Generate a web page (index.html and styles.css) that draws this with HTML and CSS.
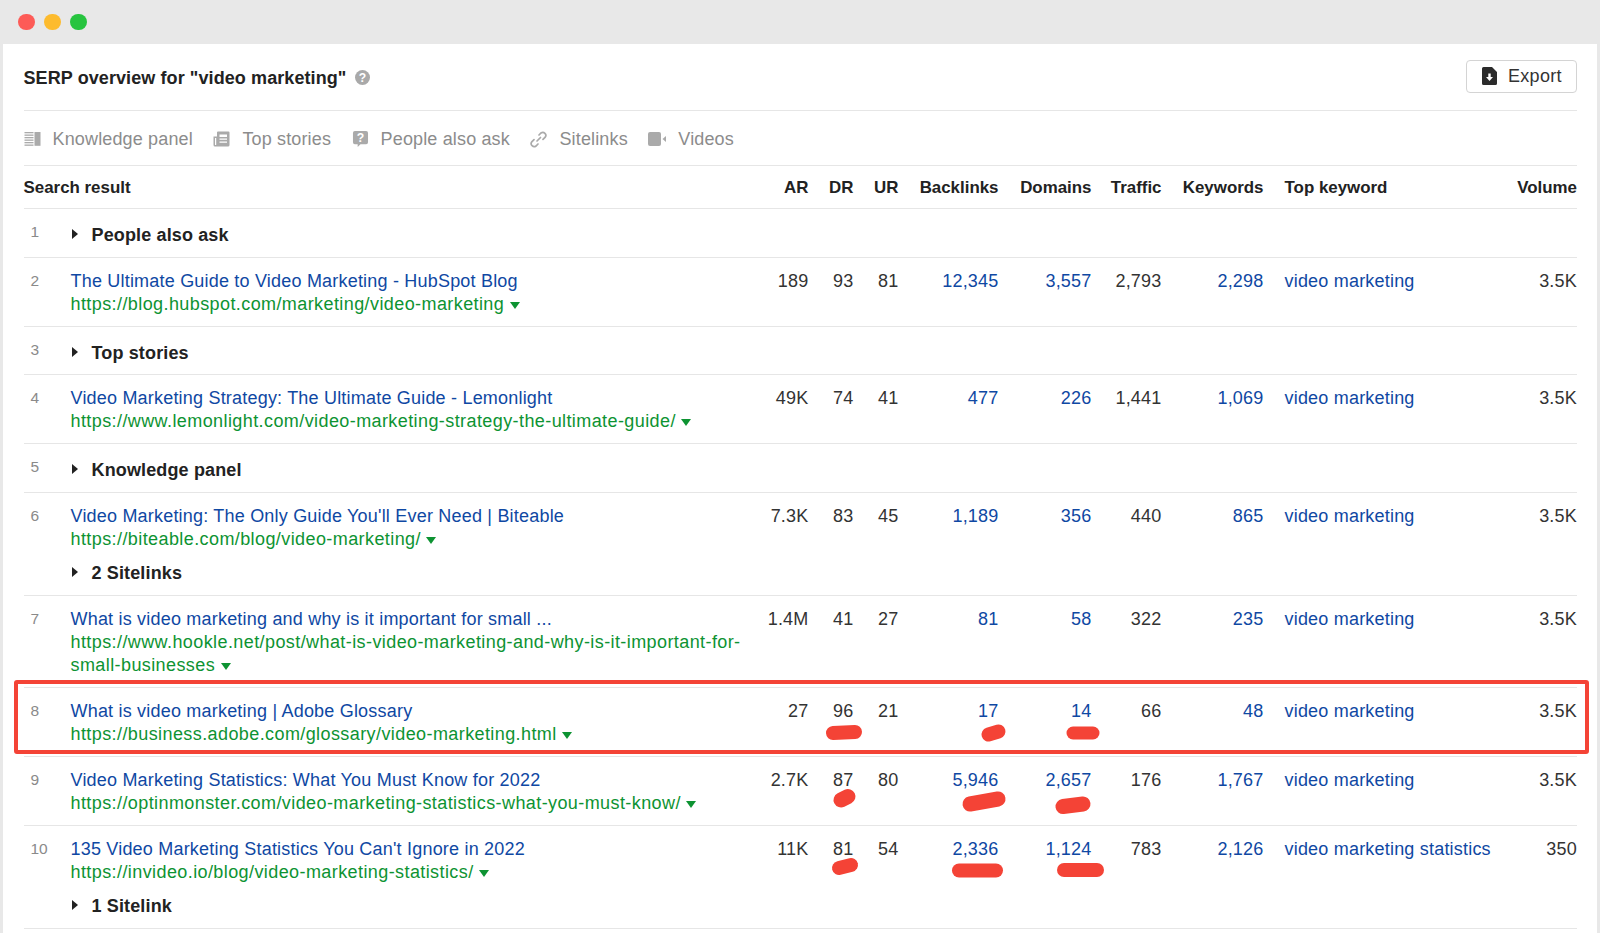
FILE: index.html
```html
<!DOCTYPE html>
<html lang="en">
<head>
<meta charset="utf-8">
<title>SERP overview</title>
<link rel="stylesheet" href="styles.css">
</head>
<body>
<div class="window">
  <div class="titlebar">
    <span class="light red"></span><span class="light yellow"></span><span class="light green"></span>
  </div>
  <main class="panel">
    <header class="head">
      <h1 class="title">SERP overview for "video marketing"
        <svg class="help" viewBox="0 0 16 16"><circle cx="8" cy="8" r="8" fill="#a9a9a9"/><text x="8" y="12.5" text-anchor="middle" class="help-mark">?</text></svg>
      </h1>
      <button class="export">
        <svg class="export-icon" viewBox="0 0 15 18"><path d="M1.5 0H10l5 5v11.5a1.5 1.5 0 0 1-1.5 1.5h-12A1.5 1.5 0 0 1 0 16.500V1.500A1.500 1.500 0 0 1 1.500 0z" fill="#2b2b2b"/><path d="M6.300 6.500h2.400v3.500h2.300L7.500 14 4 10h2.300z" fill="#fff"/></svg>
        Export
      </button>
    </header>
    <nav class="features">
      <span class="feature">
        <svg class="ficon" viewBox="0 0 16 16"><g fill="#aaa"><rect x="0" y="1" width="9" height="1.300"/><rect x="0" y="3.500" width="9" height="1.300"/><rect x="0" y="6" width="9" height="1.300"/><rect x="0" y="8.500" width="9" height="1.300"/><rect x="0" y="11" width="9" height="1.300"/><rect x="0" y="13.500" width="9" height="1.300"/><rect x="10" y="1" width="6" height="13.800"/></g></svg>
        Knowledge panel</span>
      <span class="feature">
        <svg class="ficon" viewBox="0 0 17 16"><path d="M4 1.500a1 1 0 0 1 1-1h10.500a1 1 0 0 1 1 1v12.500a1.500 1.500 0 0 1-1.500 1.500H2a1.500 1.500 0 0 1-1.500-1.500V5.500H4z" fill="#aaa"/><path d="M2 7h1.200v7H2z" fill="#fff"/><path d="M6.500 3.500h7.500v2.500H6.500zM6.500 7.500h7.500v1.300H6.500zM6.500 10.500h7.500v1.300H6.500z" fill="#fff"/></svg>
        Top stories</span>
      <span class="feature">
        <svg class="ficon" viewBox="0 0 16 17"><path d="M2 0h12a2 2 0 0 1 2 2v10a2 2 0 0 1-2 2H8l-3 3v-3H2a2 2 0 0 1-2-2V2a2 2 0 0 1 2-2z" fill="#aaa"/><text x="8" y="11.500" text-anchor="middle" class="help-mark">?</text></svg>
        People also ask</span>
      <span class="feature">
        <svg class="ficon ficon-link" viewBox="0 0 17 17"><g fill="none" stroke="#aaa" stroke-width="1.700" stroke-linecap="round"><path d="M7 10l3.500-3.500"/><path d="M9 4l2-2a3 3 0 0 1 4.200 4.200l-2.200 2.200"/><path d="M8 13l-2 2a3 3 0 0 1-4.200-4.200l2.200-2.200"/></g></svg>
        Sitelinks</span>
      <span class="feature">
        <svg class="ficon ficon-video" viewBox="0 0 18 14"><rect x="0" y="0" width="13" height="14" rx="2" fill="#aaa"/><path d="M14.500 7L18 4v6z" fill="#aaa"/></svg>
        Videos</span>
    </nav>
    <table class="serp">
      <colgroup>
        <col class="c-num"><col class="c-title"><col class="c-ar"><col class="c-dr"><col class="c-ur"><col class="c-back"><col class="c-dom"><col class="c-traffic"><col class="c-key"><col class="c-top"><col class="c-vol">
      </colgroup>
      <thead>
        <tr>
          <th class="left" colspan="2">Search result</th>
          <th>AR</th><th>DR</th><th>UR</th><th>Backlinks</th><th>Domains</th><th>Traffic</th><th>Keywords</th><th class="top">Top keyword</th><th>Volume</th>
        </tr>
      </thead>
      <tbody>
        <tr class="section">
          <td class="num">1</td>
          <td colspan="10"><span class="tri"></span><b>People also ask</b></td>
        </tr>
        <tr>
          <td class="num">2</td>
          <td><a class="link">The Ultimate Guide to Video Marketing - HubSpot Blog</a><div class="url">https://blog.hubspot.com/marketing/video-marketing <span class="caret"></span></div></td>
          <td>189</td><td>93</td><td>81</td><td class="blue">12,345</td><td class="blue">3,557</td><td>2,793</td><td class="blue">2,298</td><td class="top blue">video marketing</td><td>3.5K</td>
        </tr>
        <tr class="section">
          <td class="num">3</td>
          <td colspan="10"><span class="tri"></span><b>Top stories</b></td>
        </tr>
        <tr>
          <td class="num">4</td>
          <td><a class="link">Video Marketing Strategy: The Ultimate Guide - Lemonlight</a><div class="url">https://www.lemonlight.com/video-marketing-strategy-the-ultimate-guide/ <span class="caret"></span></div></td>
          <td>49K</td><td>74</td><td>41</td><td class="blue">477</td><td class="blue">226</td><td>1,441</td><td class="blue">1,069</td><td class="top blue">video marketing</td><td>3.5K</td>
        </tr>
        <tr class="section">
          <td class="num">5</td>
          <td colspan="10"><span class="tri"></span><b>Knowledge panel</b></td>
        </tr>
        <tr>
          <td class="num">6</td>
          <td><a class="link">Video Marketing: The Only Guide You'll Ever Need | Biteable</a><div class="url">https://biteable.com/blog/video-marketing/ <span class="caret"></span></div><div class="sub"><span class="tri"></span><b>2 Sitelinks</b></div></td>
          <td>7.3K</td><td>83</td><td>45</td><td class="blue">1,189</td><td class="blue">356</td><td>440</td><td class="blue">865</td><td class="top blue">video marketing</td><td>3.5K</td>
        </tr>
        <tr>
          <td class="num">7</td>
          <td><a class="link">What is video marketing and why is it important for small ...</a><div class="url">https://www.hookle.net/post/what-is-video-marketing-and-why-is-it-important-for-small-businesses <span class="caret"></span></div></td>
          <td>1.4M</td><td>41</td><td>27</td><td class="blue">81</td><td class="blue">58</td><td>322</td><td class="blue">235</td><td class="top blue">video marketing</td><td>3.5K</td>
        </tr>
        <tr>
          <td class="num">8</td>
          <td><a class="link">What is video marketing | Adobe Glossary</a><div class="url">https://business.adobe.com/glossary/video-marketing.html <span class="caret"></span></div></td>
          <td>27</td><td>96</td><td>21</td><td class="blue">17</td><td class="blue">14</td><td>66</td><td class="blue">48</td><td class="top blue">video marketing</td><td>3.5K</td>
        </tr>
        <tr>
          <td class="num">9</td>
          <td><a class="link">Video Marketing Statistics: What You Must Know for 2022</a><div class="url">https://optinmonster.com/video-marketing-statistics-what-you-must-know/ <span class="caret"></span></div></td>
          <td>2.7K</td><td>87</td><td>80</td><td class="blue">5,946</td><td class="blue">2,657</td><td>176</td><td class="blue">1,767</td><td class="top blue">video marketing</td><td>3.5K</td>
        </tr>
        <tr>
          <td class="num">10</td>
          <td><a class="link">135 Video Marketing Statistics You Can't Ignore in 2022</a><div class="url">https://invideo.io/blog/video-marketing-statistics/ <span class="caret"></span></div><div class="sub"><span class="tri"></span><b>1 Sitelink</b></div></td>
          <td>11K</td><td>81</td><td>54</td><td class="blue">2,336</td><td class="blue">1,124</td><td>783</td><td class="blue">2,126</td><td class="top blue">video marketing statistics</td><td>350</td>
        </tr>
      </tbody>
    </table>
  </main>
</div>
<svg class="marks" viewBox="0 0 1600 933" width="1600" height="933">
  <rect class="frame" x="16" y="682" width="1571" height="70" rx="1"/>
  <g class="smear">
    <path stroke-width="14" d="M833 733L855 732"/>
    <path stroke-width="14" d="M988.500 734.500L998.500 731.500"/>
    <path stroke-width="13" d="M1073 733H1093"/>
    <path stroke-width="15" d="M841 800L848 796.500"/>
    <path stroke-width="15" d="M970 804L998 799"/>
    <path stroke-width="15" d="M1063 806.500L1083 804"/>
    <path stroke-width="14" d="M839 868L851 865"/>
    <path stroke-width="14" d="M959 870.500H996"/>
    <path stroke-width="14" d="M1064 870H1097"/>
  </g>
</svg>
</body>
</html>
```
FILE: styles.css
```css
* { box-sizing: border-box; }
html, body { margin: 0; padding: 0; }
body {
  width: 1600px;
  height: 933px;
  overflow: hidden;
  position: relative;
  background: #e8e8e8;
  font-family: "Liberation Sans", Arial, sans-serif;
  font-size: 18px;
  color: #333;
}
.window { display: flex; flex-direction: column; height: 933px; padding: 0 3px 0 3px; }
.titlebar { height: 44px; display: flex; align-items: center; gap: 9.500px; padding-left: 15px; flex: none; }
.light { width: 16.500px; height: 16.500px; border-radius: 50%; }
.red { background: #fd5b57; }
.yellow { background: #fdbb2e; }
.green { background: #27c43f; }
.panel { flex: 1; background: #fff; padding: 0 20px 0 20.500px; }
.head {
  height: 67px;
  display: flex;
  align-items: center;
  justify-content: space-between;
  border-bottom: 1px solid #e6e6e6;
}
.title {
  margin: 1px 0 0;
  font-size: 18px;
  line-height: 24px;
  font-weight: 700;
  letter-spacing: .09px;
  color: #222;
  display: flex;
  align-items: center;
  gap: 8px;
}
.help { width: 15px; height: 15px; }
.help-mark { font: 700 13px "Liberation Sans", Arial, sans-serif; fill: #fff; letter-spacing: 0; }
.export {
  width: 111px;
  height: 33px;
  margin-top: -2px;
  border: 1px solid #d4d4d4;
  border-radius: 4px;
  background: #fff;
  display: flex;
  align-items: center;
  gap: 11px;
  padding: 0 0 0 15px;
  font: 18px "Liberation Sans", Arial, sans-serif;
  letter-spacing: .3px;
  color: #333;
}
.export-icon { width: 15px; height: 18px; flex: none; }
.features {
  height: 55px;
  padding-top: 2px;
  display: flex;
  align-items: center;
  gap: 20.500px;
  border-bottom: 1px solid #e6e6e6;
  color: #8c8c8c;
  letter-spacing: .15px;
  white-space: nowrap;
}
.feature { display: flex; align-items: center; gap: 12px; }
.ficon { width: 17px; height: 16px; flex: none; }
.ficon-link { width: 17px; height: 17px; }
.ficon-video { width: 18px; height: 14px; }
.serp {
  width: 1553.500px;
  table-layout: fixed;
  border-collapse: separate;
  border-spacing: 0;
  letter-spacing: .2px;
}
.c-num { width: 47px; }
.c-title { width: 674px; }
.c-ar { width: 64px; }
.c-dr { width: 45px; }
.c-ur { width: 45px; }
.c-back { width: 100px; }
.c-dom { width: 93px; }
.c-traffic { width: 70px; }
.c-key { width: 102px; }
.c-top { width: 246.500px; }
.c-vol { width: 67px; }
th {
  height: 43px;
  padding: 2px 0 0;
  font-size: 16.900px;
  font-weight: 700;
  letter-spacing: 0;
  color: #222;
  text-align: right;
  border-bottom: 1px solid #e6e6e6;
  white-space: nowrap;
}
th.left { text-align: left; }
td {
  padding: 12px 0 10px;
  line-height: 23px;
  vertical-align: top;
  text-align: right;
  border-bottom: 1px solid #e6e6e6;
}
td:nth-child(2) { text-align: left; }
.top { text-align: left !important; padding-left: 21px; }
.num { text-align: left; padding: 11px 0 11px 7px; color: #8a8a8a; font-size: 15.500px; letter-spacing: 0; }
.link, .blue { color: #0f48a3; }
.url { color: #0d9332; overflow-wrap: anywhere; letter-spacing: .41px; }
.caret {
  display: inline-block;
  width: 0;
  height: 0;
  margin-left: 0;
  vertical-align: 1px;
  border-left: 5px solid transparent;
  border-right: 5px solid transparent;
  border-top: 7px solid #0d9332;
}
.tri {
  display: inline-block;
  width: 0;
  height: 0;
  margin: 0 14px 0 1px;
  vertical-align: 2px;
  border-top: 5px solid transparent;
  border-bottom: 5px solid transparent;
  border-left: 6px solid #222;
}
b { color: #222; font-weight: 700; letter-spacing: .14px; }
.sub { margin-top: 11px; }
.section td { padding: 15px 0 9.500px; }
.section td.num { padding: 11px 0 13.500px 7px; }
.marks { position: absolute; left: 0; top: 0; pointer-events: none; }
.frame { fill: none; stroke: #f44336; stroke-width: 4; }
.smear path { fill: none; stroke: #f44336; stroke-linecap: round; }
```
